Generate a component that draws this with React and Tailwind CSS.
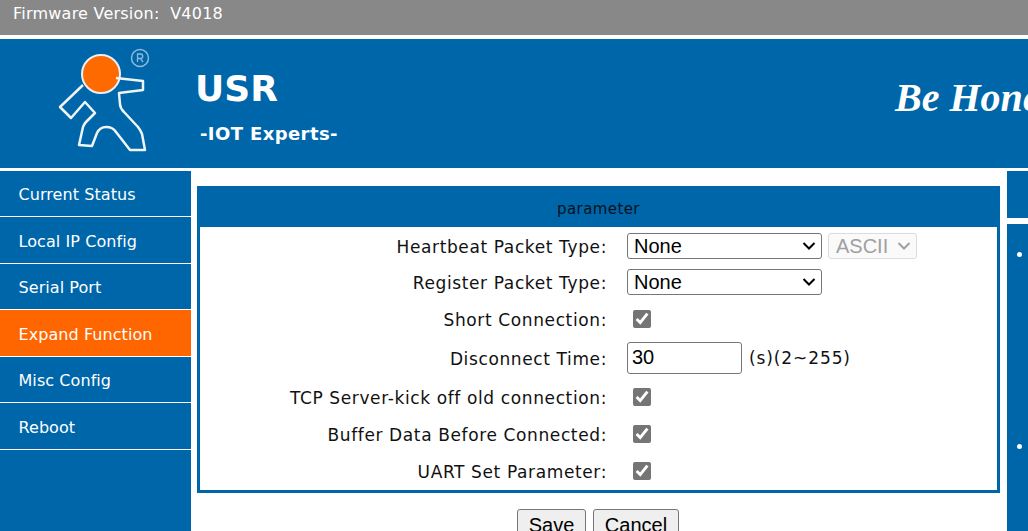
import React from "react";

const NAV = ["Current Status", "Local IP Config", "Serial Port", "Expand Function", "Misc Config", "Reboot"];

const FONT = "font-['DejaVu_Sans',sans-serif]";
const FIELD = "font-['Liberation_Sans',sans-serif] text-[20px] text-black border border-[#767676] rounded-[3px]";

function Logo() {
  return (
    <svg viewBox="0 0 160 129" className="w-[160px] h-[129px] shrink-0" fill="none">
      <circle cx="101" cy="35" r="19" fill="#ff6a00" stroke="#e8f0f6" strokeWidth="2" />
      <circle cx="140" cy="19" r="8.5" stroke="#8fb9d8" strokeWidth="1.5" />
      <path d="M137.5 23v-8h3a2.2 2.2 0 0 1 0 4.5h-3m3 0l2.5 3.500" stroke="#8fb9d8" strokeWidth="1.3" />
      <path
        d="M83 46L60 68l11 11 14-16 10 11-9 9q-2 2-3 5l-4 18 13 1 5-13q3-6 9-6 7 0 10 5l14 18 15 0-3-16q-1-3-4-7l-14-15q-4-4-4-8l-1-11 24-3 0-9-27-3"
        stroke="#eef4f8"
        strokeWidth="2.500"
        strokeLinejoin="round"
      />
    </svg>
  );
}

function Chevron({ className }) {
  return (
    <svg
      viewBox="0 0 14 8"
      fill="none"
      stroke="currentColor"
      strokeWidth="2"
      className={`absolute pointer-events-none w-[14px] h-[8px] ${className}`}
    >
      <polyline points="1.500 1 7 6.500 12.500 1" />
    </svg>
  );
}

function Row({ label, children }) {
  return (
    <div className="flex items-center">
      <div className="w-[407px] pt-[4px] text-right text-[17px] tracking-[0.62px] text-[#111]">{label}</div>
      <div className="ml-[20px] flex items-center">{children}</div>
    </div>
  );
}

function Check() {
  return (
    <input
      type="checkbox"
      checked
      readOnly
      className="ml-[6px] w-[18px] h-[18px] accent-[#757575]"
    />
  );
}

function NoneSelect() {
  return (
    <div className="relative">
      <select className={`block appearance-none w-[195px] h-[26px] pl-[6px] pb-[1px] leading-[20px] ${FIELD}`}>
        <option>None</option>
      </select>
      <Chevron className="left-[175px] top-[9px] text-black" />
    </div>
  );
}

export default function App() {
  return (
    <div className={`w-[1028px] h-[531px] overflow-hidden bg-white ${FONT}`}>
      <div className="h-[35px] bg-[#888888] pl-[13px] pt-[2px] text-[16px] tracking-[0.23px] text-white">
        Firmware Version:&nbsp; V4018
      </div>

      <div className="mt-[4px] h-[129px] bg-[#0066aa] flex overflow-hidden text-white">
        <Logo />
        <div className="ml-[35px] w-[700px] shrink-0">
          <div className="mt-[28px] text-[36px] leading-[44px] font-bold">USR</div>
          <div className="mt-[12px] ml-[5px] text-[18px] tracking-[0.4px] leading-[22px] font-bold">-IOT Experts-</div>
        </div>
        <div className="mt-[34px] font-['Liberation_Serif',serif] italic font-bold text-[40px] leading-[50px] whitespace-nowrap">
          Be Honest, Do Best
        </div>
      </div>

      <div className="mt-[3px] flex h-[360px]">
        <div className="w-[191px] shrink-0 bg-[#0066aa] text-white text-[16px] tracking-[0.07px]">
          {NAV.map((item) => (
            <div
              key={item}
              className={`h-[46.470px] pl-[18.500px] pt-[12.400px] border-b border-white ${item === "Expand Function" ? "bg-[#ff6600]" : ""}`}
            >
              {item}
            </div>
          ))}
        </div>

        <div className="w-[803px] ml-[6px] mt-[15px] shrink-0">
          <div className="h-[307px] border-[3px] border-[#0066aa] flex flex-col">
            <div className="h-[38px] shrink-0 -mt-[3px] pt-[3px] box-content bg-[#0066aa] text-center text-[15px] tracking-[0.4px] leading-[40px] text-[#06121c]">
              parameter
            </div>
            <div className="flex flex-col pt-[6px]">
              <div className="h-[26px] flex items-center">
                <Row label="Heartbeat Packet Type:">
                  <NoneSelect />
                  <div className="relative ml-[6px]">
                    <select disabled className="block appearance-none w-[89px] h-[26px] font-['Liberation_Sans',sans-serif] text-[20px] leading-[20px] pl-[7px] pb-[1px] border border-[#dcdcdc] rounded-[3px] text-[#a0a0a0] bg-[#fafafa]">
                      <option>ASCII</option>
                    </select>
                    <Chevron className="left-[69px] top-[9px] text-[#a0a0a0]" />
                  </div>
                </Row>
              </div>
              <div className="h-[26px] mt-[10px] flex items-center">
                <Row label="Register Packet Type:">
                  <NoneSelect />
                </Row>
              </div>
              <div className="h-[26px] mt-[11px] flex items-center">
                <Row label="Short Connection:"><Check /></Row>
              </div>
              <div className="h-[32px] mt-[10px] flex items-center">
                <Row label="Disconnect Time:">
                  <input
                    readOnly
                    value="30"
                    className={`w-[115px] h-[32px] px-[4px] pb-[2px] ${FIELD}`}
                  />
                  <span className="ml-[7px] pt-[2px] text-[17px] tracking-[0.9px] text-[#111]">(s)(2~255)</span>
                </Row>
              </div>
              <div className="h-[26px] mt-[10px] flex items-center">
                <Row label="TCP Server-kick off old connection:"><Check /></Row>
              </div>
              <div className="h-[26px] mt-[11px] flex items-center">
                <Row label="Buffer Data Before Connected:"><Check /></Row>
              </div>
              <div className="h-[26px] mt-[11px] flex items-center">
                <Row label="UART Set Parameter:"><Check /></Row>
              </div>
            </div>
          </div>
          <div className="mt-[16px] pr-[1px] flex justify-center gap-[7px] font-['Liberation_Sans',sans-serif] text-[20px] text-black">
            <button className="w-[69px] h-[32px] bg-[#efefef] border border-[#767676] rounded-[3px]">Save</button>
            <button className="w-[86px] h-[32px] bg-[#efefef] border border-[#767676] rounded-[3px]">Cancel</button>
          </div>
        </div>

        <div className="ml-[7px] flex-1 flex flex-col">
          <div className="h-[47px] bg-[#0066aa]" />
          <div className="mt-[6px] h-[307px] bg-[#0066aa] text-white">
            <div className="pt-[28px] pl-[10px]">
              <div className="w-[5px] h-[5px] rounded-full bg-white" />
            </div>
            <div className="pt-[187px] pl-[10px]">
              <div className="w-[5px] h-[5px] rounded-full bg-white" />
            </div>
          </div>
        </div>
      </div>
    </div>
  );
}
